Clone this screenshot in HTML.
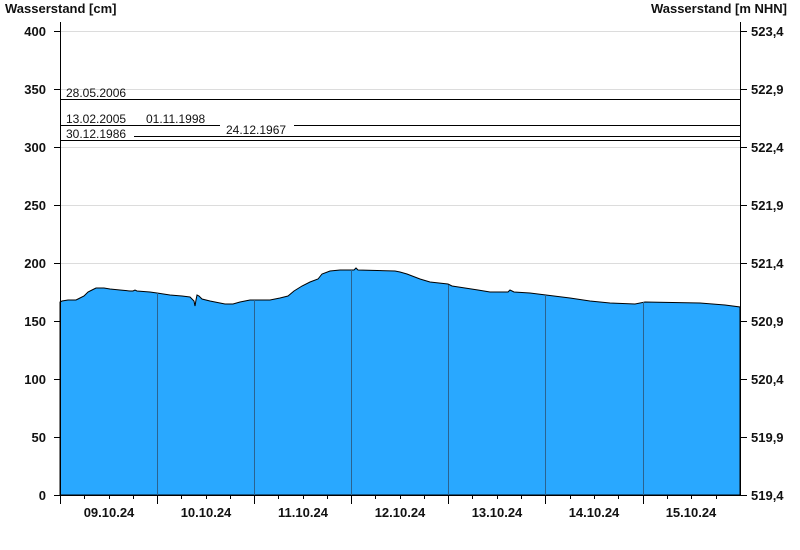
<!DOCTYPE html>
<html><head><meta charset="utf-8"><style>
html,body{margin:0;padding:0;background:#fff;}
svg{display:block;}
text{font-family:"Liberation Sans",Arial,sans-serif;font-size:12px;fill:#111;}
.b{font-weight:bold;font-size:13px;}
</style></head><body>
<svg width="800" height="550" xmlns="http://www.w3.org/2000/svg">
<text x="5" y="13" class="b">Wasserstand [cm]</text>
<text x="787" y="13" class="b" text-anchor="end">Wasserstand [m NHN]</text>
<g stroke="#dcdcdc" stroke-width="1">
<line x1="60" x2="740" y1="31.5" y2="31.5"/>
<line x1="60" x2="740" y1="89.5" y2="89.5"/>
<line x1="60" x2="740" y1="147.5" y2="147.5"/>
<line x1="60" x2="740" y1="205.5" y2="205.5"/>
<line x1="60" x2="740" y1="263.5" y2="263.5"/>
<line x1="60" x2="740" y1="321.5" y2="321.5"/>
<line x1="60" x2="740" y1="379.5" y2="379.5"/>
<line x1="60" x2="740" y1="437.5" y2="437.5"/>
</g>
<path fill="#29a8ff" stroke="#000" stroke-width="1" d="M60,495 L60,302 L62,301 L68,300 L76,300 L78,299 L84,296 L88,292 L92,290 L96,288 L104,288 L110,289 L120,290 L130,291 L133,291 L135,290 L137,291 L150,292 L157,293 L170,295 L182,296 L190,297 L194,301 L195,306 L196,300 L197,295 L199,296 L202,299 L210,301 L220,303 L225,304 L233,304 L240,302 L245,301 L250,300 L270,300 L280,298 L288,296 L294,291 L302,286 L310,282 L318,279 L322,274 L330,271 L340,270 L354,270 L356,268 L358,270 L395,271 L400,272 L407,274 L420,279 L430,282 L448,284 L452,286 L465,288 L478,290 L490,292 L508,292 L510,290 L514,292 L530,293 L546,295 L570,298 L590,301 L610,303 L635,304 L645,302 L700,303 L725,305 L740,307 L740,495 Z"/>
<g stroke="#2a6390" stroke-width="1">
<line x1="157.5" x2="157.5" y1="293" y2="495"/>
<line x1="254.5" x2="254.5" y1="300" y2="495"/>
<line x1="351.5" x2="351.5" y1="270" y2="495"/>
<line x1="448.5" x2="448.5" y1="285" y2="495"/>
<line x1="545.5" x2="545.5" y1="295" y2="495"/>
<line x1="643.5" x2="643.5" y1="302" y2="495"/>
</g>
<g stroke="#000" stroke-width="1">
<line x1="60" x2="740" y1="99.5" y2="99.5"/>
<line x1="60" x2="220" y1="125.5" y2="125.5"/>
<line x1="294" x2="740" y1="125.5" y2="125.5"/>
<line x1="134" x2="740" y1="136.5" y2="136.5"/>
<line x1="60" x2="740" y1="140.5" y2="140.5"/>
</g>
<text x="66" y="97">28.05.2006</text>
<text x="66" y="123">13.02.2005</text>
<text x="146" y="123">01.11.1998</text>
<text x="226" y="134">24.12.1967</text>
<text x="66" y="138">30.12.1986</text>
<g stroke="#000" stroke-width="1">
<line x1="60.5" x2="60.5" y1="22" y2="495"/>
<line x1="740.5" x2="740.5" y1="22" y2="495"/>
<line x1="60" x2="741" y1="495.5" y2="495.5"/>
<line x1="54" x2="60" y1="31.5" y2="31.5"/><line x1="54" x2="60" y1="89.5" y2="89.5"/><line x1="54" x2="60" y1="147.5" y2="147.5"/><line x1="54" x2="60" y1="205.5" y2="205.5"/><line x1="54" x2="60" y1="263.5" y2="263.5"/><line x1="54" x2="60" y1="321.5" y2="321.5"/><line x1="54" x2="60" y1="379.5" y2="379.5"/><line x1="54" x2="60" y1="437.5" y2="437.5"/><line x1="54" x2="60" y1="495.5" y2="495.5"/>
<line x1="740" x2="747" y1="31.5" y2="31.5"/><line x1="740" x2="747" y1="89.5" y2="89.5"/><line x1="740" x2="747" y1="147.5" y2="147.5"/><line x1="740" x2="747" y1="205.5" y2="205.5"/><line x1="740" x2="747" y1="263.5" y2="263.5"/><line x1="740" x2="747" y1="321.5" y2="321.5"/><line x1="740" x2="747" y1="379.5" y2="379.5"/><line x1="740" x2="747" y1="437.5" y2="437.5"/><line x1="740" x2="747" y1="495.5" y2="495.5"/>
<line x1="60.5" x2="60.5" y1="495" y2="504"/><line x1="157.5" x2="157.5" y1="495" y2="504"/><line x1="254.5" x2="254.5" y1="495" y2="504"/><line x1="351.5" x2="351.5" y1="495" y2="504"/><line x1="448.5" x2="448.5" y1="495" y2="504"/><line x1="545.5" x2="545.5" y1="495" y2="504"/><line x1="643.5" x2="643.5" y1="495" y2="504"/>
<line x1="84.5" x2="84.5" y1="495" y2="499"/><line x1="109.5" x2="109.5" y1="495" y2="499"/><line x1="133.5" x2="133.5" y1="495" y2="499"/>
<line x1="181.5" x2="181.5" y1="495" y2="499"/><line x1="206.5" x2="206.5" y1="495" y2="499"/><line x1="230.5" x2="230.5" y1="495" y2="499"/>
<line x1="278.5" x2="278.5" y1="495" y2="499"/><line x1="303.5" x2="303.5" y1="495" y2="499"/><line x1="327.5" x2="327.5" y1="495" y2="499"/>
<line x1="375.5" x2="375.5" y1="495" y2="499"/><line x1="400.5" x2="400.5" y1="495" y2="499"/><line x1="424.5" x2="424.5" y1="495" y2="499"/>
<line x1="472.5" x2="472.5" y1="495" y2="499"/><line x1="497.5" x2="497.5" y1="495" y2="499"/><line x1="521.5" x2="521.5" y1="495" y2="499"/>
<line x1="570.5" x2="570.5" y1="495" y2="499"/><line x1="594.5" x2="594.5" y1="495" y2="499"/><line x1="618.5" x2="618.5" y1="495" y2="499"/>
<line x1="667.5" x2="667.5" y1="495" y2="499"/><line x1="691.5" x2="691.5" y1="495" y2="499"/><line x1="716.5" x2="716.5" y1="495" y2="499"/>
</g>
<g text-anchor="end">
<text x="46" y="36" class="b">400</text><text x="46" y="94" class="b">350</text><text x="46" y="152" class="b">300</text><text x="46" y="210" class="b">250</text><text x="46" y="268" class="b">200</text><text x="46" y="326" class="b">150</text><text x="46" y="384" class="b">100</text><text x="46" y="442" class="b">50</text><text x="46" y="500" class="b">0</text>
</g>
<g>
<text x="751" y="36" class="b">523,4</text><text x="751" y="94" class="b">522,9</text><text x="751" y="152" class="b">522,4</text><text x="751" y="210" class="b">521,9</text><text x="751" y="268" class="b">521,4</text><text x="751" y="326" class="b">520,9</text><text x="751" y="384" class="b">520,4</text><text x="751" y="442" class="b">519,9</text><text x="751" y="500" class="b">519,4</text>
</g>
<g text-anchor="middle">
<text x="109" y="517" class="b">09.10.24</text><text x="206" y="517" class="b">10.10.24</text><text x="303" y="517" class="b">11.10.24</text><text x="400" y="517" class="b">12.10.24</text><text x="497" y="517" class="b">13.10.24</text><text x="594" y="517" class="b">14.10.24</text><text x="691" y="517" class="b">15.10.24</text>
</g>
</svg>
</body></html>
